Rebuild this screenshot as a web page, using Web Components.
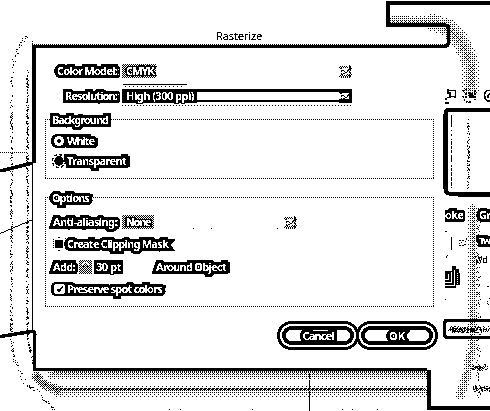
<!DOCTYPE html>
<html lang="en"><head><meta charset="utf-8"><title>Rasterize</title>
<style>html,body{margin:0;background:#fff;overflow:hidden}</style></head><body>
<raster-app></raster-app>
<script>
const define=(name,html,setup)=>customElements.define(name,class extends HTMLElement{
  connectedCallback(){
    if(this.shadowRoot)return;
    this.attachShadow({mode:'open'}).innerHTML=html;
    if(setup)setup(this,this.shadowRoot);
  }
});

// White lettering with a heavy dark outline; "fit" is the run's width in pixels.
define('halo-text',`<style>
:host{display:inline-block;white-space:nowrap;flex:none;color:#fff;font-weight:700;position:relative;z-index:1}
:host([plain]){color:#000;font-weight:500}
span{display:inline-block;-webkit-text-stroke:6.6px #000;paint-order:stroke fill;stroke-linejoin:round}
:host([plain]) span{-webkit-text-stroke:0}
:host([bare]) span{-webkit-text-stroke:3px #000}
</style><span><slot></slot></span>`,(el,root)=>{
  const fit=+el.getAttribute('fit'),s=root.querySelector('span');
  if(fit){s.style.letterSpacing=(fit-s.getBoundingClientRect().width)/el.textContent.length+'px';el.style.width=fit+'px';}
});

// Dithered bands that follow polylines: [points, half width, density, scattered].
define('dither-field',`<style>:host{position:absolute;inset:0}svg{display:block}</style>
<svg width="490" height="411" shape-rendering="crispEdges"><path/></svg>`,(el,root)=>{
  const bands=[
    [[[26,36],[20,43],[14,58],[11,75],[11,340],[15,362],[25,383],[38,392],[54,410]],1.9,.33,1],
    [[[27,70],[27,335],[33,365]],1.2,.5,1],
    [[[36,376],[43,384],[58,390]],5,.62],
    [[[52,374],[425,374]],5,.36],
    [[[56,389],[423,389]],2.2,.85],
    [[[56,391],[423,391]],6,.3],
    [[[394,20],[430,21]],5,.4],
    [[[432,22],[448,27],[459,39],[466,52],[470,66],[470,86]],9,.38],
    [[[451,115],[451,187]],.8,.55,1],[[[468,119],[468,187]],1.8,.4,1],
    [[[472,208],[471,350],[466,376],[460,394]],5,.36],
    [[[478,210],[478,395]],2.5,.2,1],
    [[[451,237],[451,249]],.6,1],
    [[[451,329],[490,329]],3.5,.75,1],
    [[[474,367],[484,367]],3.5,.7,1],[[[475,388],[490,388]],3.5,.7,1]
  ];
  const m=[0,8,2,10,12,4,14,6,3,11,1,9,15,7,13,5];
  const noise=(x,y)=>{const v=Math.sin(x*12.9898+y*78.233)*43758.5453;return v-Math.floor(v);};
  const dist=(x,y,p)=>{let b=99;for(let i=1;i<p.length;i++){
    const [ax,ay]=p[i-1],[bx,by]=p[i],dx=bx-ax,dy=by-ay;
    const t=Math.max(0,Math.min(1,((x-ax)*dx+(y-ay)*dy)/(dx*dx+dy*dy)));
    b=Math.min(b,Math.hypot(x-ax-t*dx,y-ay-t*dy));}return b;};
  let d='';
  for(let y=0;y<411;y++)for(let x=0;x<490;x++)for(const [p,w,k,n] of bands){
    const r=dist(x,y,p);
    if(r<w&&k*(1-.7*r/w)>(n?noise(x,y):(m[(y&3)*4+(x&3)]+.5)/16)){d+=`M${x} ${y}h1v1h-1z`;break;}
  }
  root.querySelector('path').setAttribute('d',d);
});

// Edges of the windows behind and around the dialog.
define('window-edges',`<style>:host{position:absolute;inset:0}svg{display:block;overflow:hidden}</style>
<svg width="490" height="411" fill="none" stroke="#000">
<g shape-rendering="crispEdges">
<path stroke-width="4" d="M490 3H388V25H445"/>
<path stroke-width="3" d="M34.500 371V331M34 369.500H427"/>
<path stroke-width="4" d="M429 370V408H490"/>
<path stroke-width="4" d="M34 163V46"/><path stroke-width="3" d="M32 46.5H446"/>
<path stroke-dasharray="1 1" d="M32 44.5H446M54 371.5H426M0 152.5H28"/>
<path stroke-width="1" d="M32.5 164V331M309.5 374V379M309.5 380V388M309.5 391V411"/>
<path stroke-dasharray="1 1" d="M32.5 41V45"/>
</g>
<path stroke-width="3.5" d="M444 25Q448.5 25 448.5 29V42Q448.5 46 445 46.500"/>
<path stroke-width="3.5" d="M0 171L33 163M0 336.500L31 331.500Q35 331 35 335"/>
<path d="M0 233.500L33 219.500"/>
<path stroke-width="4" d="M490 110H448Q445.500 110 445.500 114V189Q445.500 193 449 193.500L458 194.500H490"/>
<path stroke-width="3.500" d="M490 320.500H446Q444.500 321 444.500 325V333Q444.500 337 447 337.500H490"/>
<g stroke-width="1.600">
<path d="M449 90.500H455.500V96.500H450V92M447 97.500H451M446 100V98M445 103H449M455 96V98M448 89V94"/>
<path d="M463 92Q466 88 469 91M463 96Q464 103 471 102M468 93Q474 93 473 98M475 90V100M466 93V99" stroke-dasharray="2 1"/>
<circle cx="471" cy="95.500" r="2.500" fill="#000" stroke="none"/>
<path d="M490 90.500H487Q484.500 92 484.500 95Q484.500 99 487 101H490M490 93.500Q487 95 488 98"/>
</g>
<g shape-rendering="crispEdges">
<path stroke="none" fill="#000" d="M445 271H452V266H456V269H459V273H460V285H456V288H445Z"/>
<path stroke="#fff" d="M445 285.500H454.500V270M445 282.500H451.500V272M445 279.500H448.500V274"/>
<path stroke="#fff" stroke-dasharray="1 1" d="M457.500 273V284"/>
<path d="M445 231.500H447M446 257.500L448 255M445 299.500H446M487 286.500H489"/>
<path d="M193 228.500H194M211 228.500H212M277 228.500H278M169 409.500H170M180 409.500H181M252 409.500H253M342 409.500H343M352 409.500H353M377 409.500H378"/>
</g>
<path d="M459 240.500H465V245.500H459ZM461 242L466 246M466 238V241" stroke-dasharray="2 1"/>
<path d="M490 298Q485 302 490 306" stroke-dasharray="2 1"/>
</svg>`);

define('palette-label',`<style>:host{position:absolute;display:block;width:40px;overflow:visible;line-height:12px}</style><slot></slot>`);

define('drop-arrow',`<style>:host{display:block;flex:none;width:13px;height:13px}svg{display:block}</style>
<svg width="13" height="13" shape-rendering="crispEdges" fill="none" stroke="#000">
<path stroke-dasharray="1 1" d="M1 1.500H9M0 2.500H12M1 10.500H12M0 11.500H11M2 12.500H12"/>
<path stroke-dasharray="2 1" d="M2.500 2V12M10.500 0V12M11.500 1V12"/>
<path d="M1 3.500H3M3 5.500H5M5 6.500H6M6 7.500H8M8 6.500H9M8 5.500H10M9 4.500H11M4 8.500H6M8 9.500H9M3 9.500H4M11 3.500H13M12 9.500H13"/></svg>`);

define('select-box',`<style>
:host{display:flex;position:relative;height:14px;align-items:center;justify-content:space-between}
.v{height:14px;padding-left:4px;box-sizing:border-box;display:flex;align-items:center;
 background:repeating-conic-gradient(#000 0 25%,#fff 0 50%) 0 0/2px 2px}
:host([active]) .v{background:#000;height:14px}
:host([active]){background:linear-gradient(#000 0 3px,#fff 3px 11px,#000 11px 13px,#fff 13px)}
:host([active])::before{content:"";position:absolute;left:1px;top:-5px;width:64px;height:1px;background:#000}
:host([active])::after{content:"";position:absolute;left:0;right:0;top:16px;height:1px;background:repeating-linear-gradient(90deg,#000 0 1px,#fff 1px 3px)}
.dots{display:none}:host([active]) .dots{display:block;position:absolute;left:3px;top:-3px;width:58px;height:1px;background:repeating-linear-gradient(90deg,#000 0 1px,#fff 1px 4px)}
:host([active]) drop-arrow{background:linear-gradient(90deg,#0000 0 10px,#000 10px),linear-gradient(#000 0 3px,#0000 3px 9px,#000 9px)}
</style><i class="dots"></i><div class="v"><slot></slot></div><drop-arrow></drop-arrow>`,(el,root)=>{
  root.querySelector('.v').style.width=el.getAttribute('value-width')+'px';
});

define('form-row',`<style>:host{display:flex;align-items:center;height:20px}</style><slot></slot>`);

define('group-box',`<style>
:host{display:block;box-sizing:border-box;position:relative;width:389px;
background:repeating-linear-gradient(90deg,#000 0 1px,#fff 1px 2px) 0 0/100% 1px no-repeat,
repeating-linear-gradient(90deg,#000 0 1px,#fff 1px 2px) 0 100%/100% 1px no-repeat,
repeating-linear-gradient(#000 0 1px,#fff 1px 2px) 0 0/1px 100% no-repeat,
repeating-linear-gradient(#000 0 1px,#fff 1px 2px) 100% 0/1px 100% no-repeat}
.legend{height:12px;margin:0 0 0 7px;transform:translateY(-5px);line-height:12px}
.body{padding-left:8px}
</style><div class="legend"><slot name="legend"></slot></div><div class="body"><slot></slot></div>`);

define('choice-mark',`<style>:host{display:block;flex:none;width:14px;height:16px}svg{display:block;overflow:visible}</style><svg width="14" height="16"></svg>`,(el,root)=>{
  root.querySelector('svg').innerHTML={
    'radio-on':'<rect x="-2" y="1" width="18" height="14" rx="6"/><circle cx="6" cy="8" r="5" fill="#fff"/><circle cx="6" cy="8" r="1.700"/>',
    'radio-off':'<circle cx="6" cy="8" r="4.700"/><circle cx="6" cy="8" r="6.500" fill="none" stroke="#000" stroke-width="1.400" stroke-dasharray="3 2"/>',
    'check-off':'<path d="M2 4H10V12H2ZM5 1H7V2H5ZM5 14H7V15H5Z"/><path fill="none" stroke="#000" stroke-dasharray="1 1" d="M.5 3V13M12.500 2V14"/>',
    'check-on':'<rect x="-2" y="1" width="18" height="14" rx="5"/><rect x="1" y="3" width="11" height="10" rx="2.500" fill="#fff"/><path d="M4 8L6 10L10 5.500" fill="none" stroke="#000" stroke-width="1.600"/>'
  }[el.getAttribute('kind')];
});

define('step-buttons',`<style>:host{display:block;flex:none;width:13px;height:14px;background:repeating-conic-gradient(#000 0 25%,#fff 0 50%) 0 0/2px 2px}svg{display:block}</style>
<svg width="13" height="14" fill="none" stroke="#fff" stroke-width="1"><path d="M3 5L6.500 2L10 5M3 9L6.500 12L10 9"/><path stroke="#000" d="M4 6.500H6M8 6.500H9M5 8.500H6"/></svg>`);

define('ring-button',`<style>
:host{display:flex;box-sizing:border-box;width:82px;height:29px;border:3px solid #000;border-radius:15px;padding:2px;background:#fff}
div{flex:1;box-sizing:border-box;border:4px solid #000;border-radius:11px;display:flex;align-items:center;justify-content:center;line-height:12px}
</style><div><slot></slot></div>`);

define('rasterize-dialog',`<style>
:host{display:block;position:relative;width:490px;height:411px;box-sizing:border-box;padding-top:28px}
.title{height:16px;line-height:16px;margin-left:216px}
.form{margin:17px 0 0 37px;width:395px}
.r1{margin-left:20px}.r2{margin:5px 0 0 28px}
.l{margin-right:5px}
group-box{margin-left:8px}
.g1{margin-top:13px;height:60px}.g2{margin-top:18px;height:110px}
.buttons{display:flex;margin:14px 0 0 277px}
</style>
<div class="title"><halo-text plain fit="46">Rasterize</halo-text></div>
<div class="form">
<form-row class="r1"><halo-text fit="60" class="l">Color Model:</halo-text><select-box value-width="34" style="width:230px"><halo-text bare fit="28">CMYK</halo-text></select-box></form-row>
<form-row class="r2"><halo-text fit="52" class="l">Resolution:</halo-text><select-box active value-width="75" style="width:230px"><halo-text bare fit="68">High (300 ppi)</halo-text></select-box></form-row>
<group-box class="g1"><halo-text slot="legend" fit="56">Background</halo-text>
<form-row><choice-mark kind="radio-on"></choice-mark><halo-text fit="27">White</halo-text></form-row>
<form-row><choice-mark kind="radio-off"></choice-mark><halo-text fit="59">Transparent</halo-text></form-row></group-box>
<group-box class="g2"><halo-text slot="legend" fit="37">Options</halo-text>
<form-row style="margin-top:3px"><halo-text fit="64">Anti-aliasing:</halo-text><select-box value-width="32" style="width:175px;margin-left:5px"><halo-text bare fit="24">None</halo-text></select-box></form-row>
<form-row style="margin-top:2px"><choice-mark kind="check-off"></choice-mark><halo-text fit="101">Create Clipping Mask</halo-text></form-row>
<form-row style="margin-top:3px"><halo-text fit="22">Add:</halo-text><step-buttons style="margin-left:4px"></step-buttons><div style="margin-left:2px;background:#000;width:29px;height:14px;padding-left:2px;box-sizing:border-box;display:flex;align-items:center"><halo-text bare fit="25">30 pt</halo-text></div><halo-text fit="70" style="margin-left:33px">Around Object</halo-text></form-row>
<form-row style="margin-top:2px"><choice-mark kind="check-on"></choice-mark><halo-text fit="95">Preserve spot colors</halo-text></form-row></group-box>
</div>
<div class="buttons"><ring-button><halo-text fit="31">Cancel</halo-text></ring-button><ring-button style="margin-left:-3px"><halo-text fit="16">OK</halo-text></ring-button></div>`);

define('raster-app',`<style>
:host{display:block;position:relative;width:490px;height:411px;overflow:hidden;background:#fff;font:11px/14px "Noto Sans","Open Sans",sans-serif}
.ink{position:relative;width:490px;height:411px;overflow:hidden;background:#fff;filter:url(#ink)}
</style>
<svg width="0" height="0" style="position:absolute"><filter id="ink" x="0" y="0" width="1" height="1" color-interpolation-filters="sRGB">
<feColorMatrix type="saturate" values="0"/><feComponentTransfer><feFuncR type="discrete" tableValues="0 1"/><feFuncG type="discrete" tableValues="0 1"/><feFuncB type="discrete" tableValues="0 1"/></feComponentTransfer></filter></svg>
<div class="ink"><dither-field></dither-field><window-edges></window-edges>
<palette-label style="left:445px;top:209px;clip-path:inset(-3px 20px -3px 0)"><halo-text fit="18">oke</halo-text></palette-label>
<palette-label style="left:479px;top:209px;width:11px"><halo-text fit="11">Gr</halo-text></palette-label>
<palette-label style="left:479px;top:234px;width:11px"><halo-text fit="11" style="font-size:9.500px">Tw</halo-text></palette-label>
<palette-label style="left:475px;top:254px;width:14px;font-size:8px"><halo-text plain fit="14">Wd:</halo-text></palette-label>
<rasterize-dialog></rasterize-dialog></div>`);
</script></body></html>
